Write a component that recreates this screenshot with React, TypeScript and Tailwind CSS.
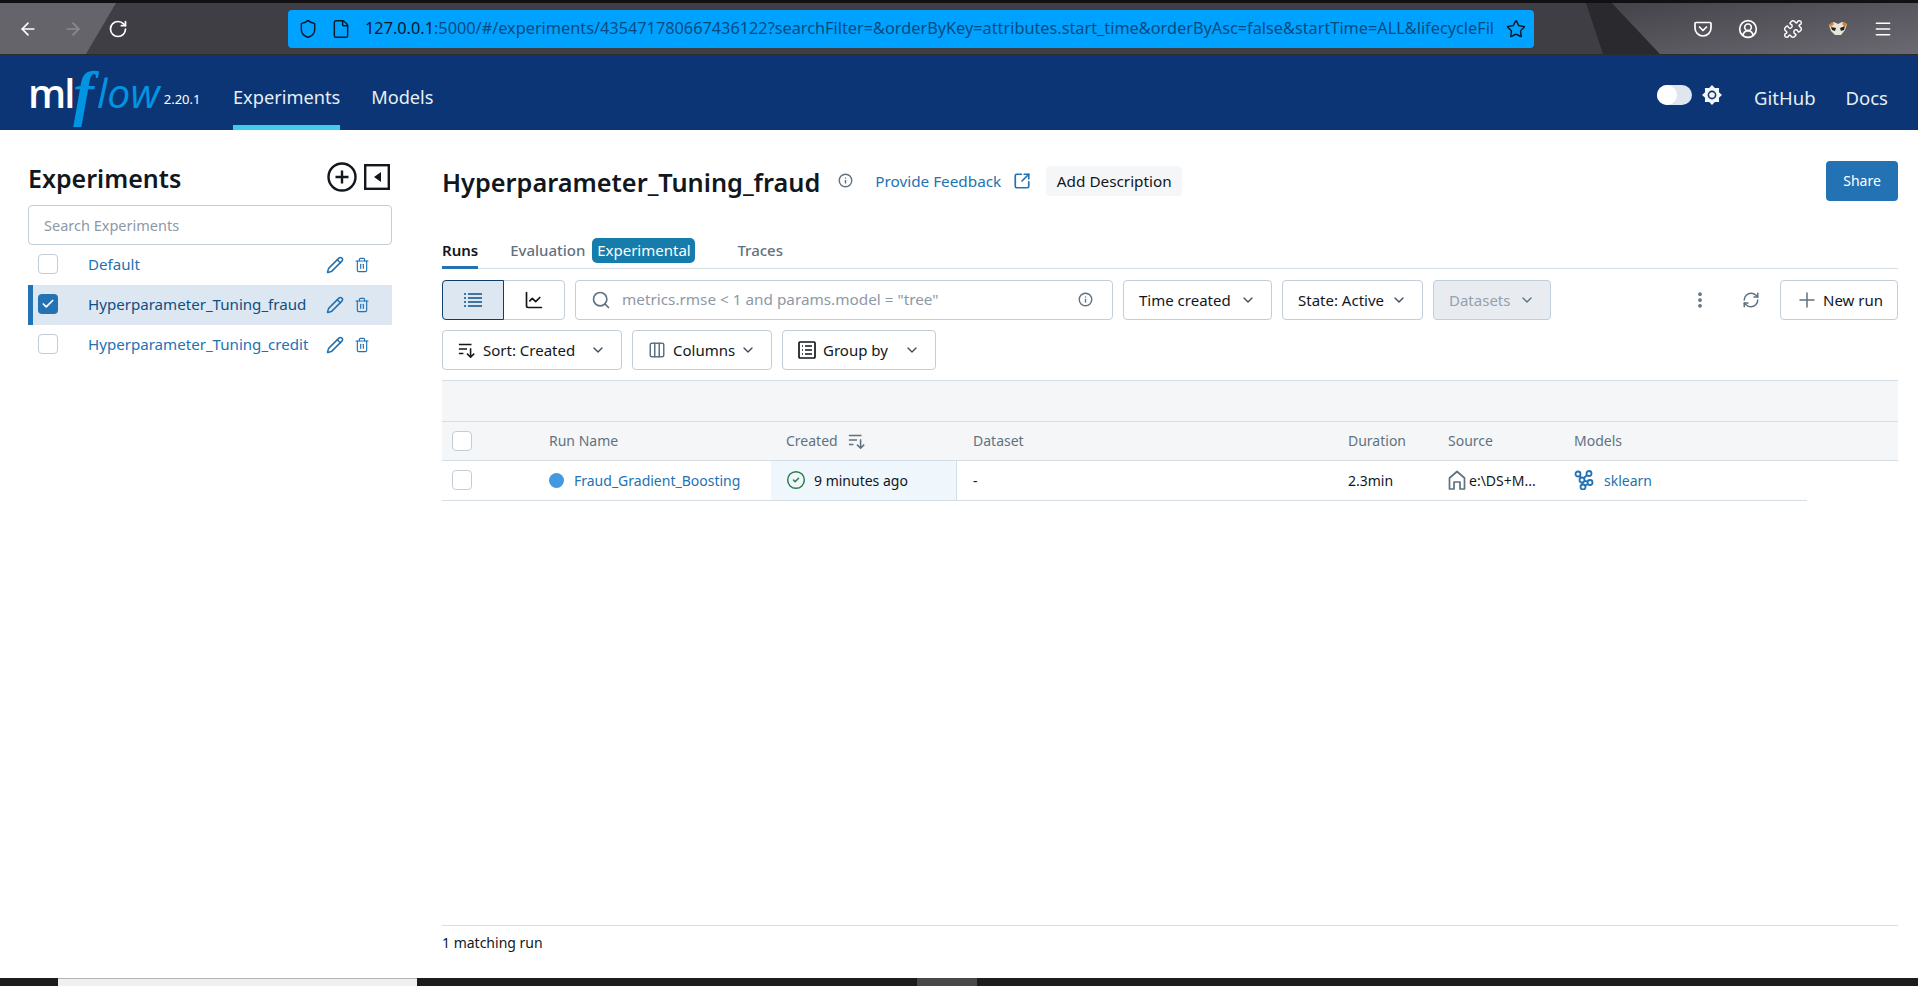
import React from 'react';
import {
  ArrowLeft,
  ArrowRight,
  RotateCw,
  Shield,
  File,
  Star,
  CircleUserRound,
  Puzzle,
  Menu,
  Pencil,
  Trash2,
  Check,
  Info,
  SquareArrowOutUpRight,
  ChartLine,
  Search,
  ChevronDown,
  EllipsisVertical,
  RefreshCw,
  Plus,
  Columns3,
  CircleCheck,
} from 'lucide-react';

const experiments = [
  { name: 'Default', selected: false },
  { name: 'Hyperparameter_Tuning_fraud', selected: true },
  { name: 'Hyperparameter_Tuning_credit', selected: false },
];

function SortIcon({ className }: { className?: string }) {
  return (
    <svg className={className} viewBox="0 0 20 20" fill="none" stroke="currentColor" strokeWidth="1.7">
      <path d="M1 4h14M1 9h9M1 14h5" />
      <path d="M14 8v10M10 14l4 4 4-4" />
    </svg>
  );
}

function ThemeBackdrop() {
  return (
    <svg className="absolute inset-0 h-full w-full" viewBox="0 0 1918 54" preserveAspectRatio="none">
      <defs>
        <linearGradient id="fade" x1="0" y1="0" x2="1" y2="1">
          <stop offset="0" stopColor="#44434a" />
          <stop offset="1" stopColor="#6b6a72" />
        </linearGradient>
      </defs>
      <rect width="1918" height="54" fill="#3f3e45" />
      <polygon points="0,3 116,3 86,54 0,54" fill="#65646b" />
      <polygon points="1586,3 1603,54 1660,54 1612,3" fill="#2a292e" />
      <polygon points="1612,3 1660,54 1918,54 1918,3" fill="url(#fade)" />
      <rect width="1918" height="3" fill="#111114" />
    </svg>
  );
}

function BrowserBar() {
  return (
    <div className="relative h-[55px] shrink-0 border-b border-[#2b2b30]">
      <ThemeBackdrop />
      <div className="relative flex h-full items-center pt-[3px]">
        <div className="flex w-[288px] items-center pl-[18px] gap-[25px]">
          <ArrowLeft className="h-5 w-5 text-white" strokeWidth={2} />
          <ArrowRight className="h-5 w-5 text-[#8c8b91]" strokeWidth={2} />
          <RotateCw className="h-5 w-5 text-white" strokeWidth={2} />
        </div>
        <div className="flex h-[38px] w-[1246px] items-center rounded-[4px] bg-[#00a2ff] pl-[10px] pr-[8px] text-[#064b80]">
          <Shield className="h-[20px] w-[20px] shrink-0 text-[#0c1a2a]" strokeWidth={1.75} />
          <File className="ml-[13px] h-[20px] w-[20px] shrink-0 text-[#0c1a2a]" strokeWidth={1.75} />
          <div className="ml-[14px] flex-1 overflow-hidden whitespace-nowrap text-[16.3px]">
            <span className="text-[#08182a]">127.0.0.1</span>
            :5000/#/experiments/435471780667436122?searchFilter=&orderByKey=attributes.start_time&orderByAsc=false&startTime=ALL&lifecycleFil
          </div>
          <Star className="ml-[10px] h-[20px] w-[20px] shrink-0 text-[#0c1a2a]" strokeWidth={1.75} />
        </div>
        <div className="ml-[159px] flex items-center gap-[25px] text-white">
          <svg className="h-5 w-5" viewBox="0 0 20 20" fill="none" stroke="currentColor" strokeWidth="1.7">
            <path d="M3 3.5h14a1 1 0 0 1 1 1V9a8 8 0 0 1-16 0V4.5a1 1 0 0 1 1-1Z" />
            <path d="M6.5 8 10 11.5 13.5 8" strokeLinecap="round" strokeLinejoin="round" />
          </svg>
          <CircleUserRound className="h-5 w-5" strokeWidth={2} />
          <Puzzle className="h-5 w-5" strokeWidth={1.75} />
          <svg className="h-5 w-5" viewBox="0 0 20 20">
            <path d="M1 6 6 3l4 2 4-2 5 2-2 6-4 5H7L3 12Z" fill="#e9e4da" />
            <path d="M3 8l5 1-1 3-3-1ZM17 7l-5 2 1 3 3-1Z" fill="#23211f" />
            <path d="M1 6 4 3l2 2-3 3ZM19 5l-3-2-2 2 3 3Z" fill="#d9822b" />
          </svg>
          <Menu className="h-5 w-5" strokeWidth={1.75} />
        </div>
      </div>
    </div>
  );
}

function Logo() {
  return (
    <div className="flex h-full w-[205px] items-center pl-[28px] text-white">
      <span className="text-[40px] leading-none font-semibold tracking-[-2px] font-['Open_Sans',sans-serif]">ml</span>
      <span className="flex items-center text-[#0194e2] text-[41px] leading-none font-medium italic font-['Open_Sans',sans-serif]">
        <span className="mr-[3px] text-[62px] leading-[40px] font-bold font-['Liberation_Serif',serif]">f</span>
        low
      </span>
      <span className="mt-[14px] ml-[4px] text-[13px]">2.20.1</span>
    </div>
  );
}

function ThemeToggle() {
  return (
    <>
      <div className="mt-[5px] flex h-[20px] w-[35px] rounded-full bg-[#dfe6ef]">
        <div className="h-[20px] w-[20px] rounded-full bg-white" />
      </div>
      <svg className="mt-[5px] ml-[10px] h-[20px] w-[20px]" viewBox="0 0 20 20">
        <path
          d="M10 0l2.87 3.07 4.2-.14-.14 4.2L20 10l-3.07 2.87.14 4.2-4.2-.14L10 20l-2.87-3.07-4.2.14.14-4.2L0 10l3.07-2.87-.14-4.2 4.2.14Z"
          fill="#f4f6fa"
        />
        <circle cx="10" cy="10" r="4.4" fill="#0b3574" />
        <circle cx="10" cy="10" r="2.8" fill="#f4f6fa" />
      </svg>
    </>
  );
}

function TopNav() {
  return (
    <header className="flex h-[75px] shrink-0 items-center bg-[#0b3574] text-[#e8eef7]">
      <Logo />
      <nav className="ml-[28px] flex h-full items-center gap-[31px] text-[18.2px]">
        <a className="flex h-full items-center border-b-[5px] border-[#43c9ed] pt-[15px]">Experiments</a>
        <a className="pt-[10px]">Models</a>
      </nav>
      <div className="ml-auto flex items-center pr-[30px] text-[18.5px]">
        <ThemeToggle />
        <a className="ml-[32px] pt-[10px]">GitHub</a>
        <a className="ml-[30px] pt-[10px]">Docs</a>
      </div>
    </header>
  );
}

function Sidebar() {
  return (
    <aside className="ml-[28px] w-[364px] shrink-0 pt-[27px]">
      <div className="flex h-[43px] items-center">
        <h2 className="text-[25px] font-semibold text-[#11171c]">Experiments</h2>
        <svg className="-mt-[3px] ml-auto h-[30px] w-[30px] text-[#11171c]" viewBox="0 0 30 30" fill="none" stroke="currentColor" strokeWidth="2.4">
          <circle cx="15" cy="15" r="13.5" />
          <path d="M15 8.5v13M8.5 15h13" />
        </svg>
        <svg className="-mt-[3px] ml-[7px] mr-[2px] h-[26px] w-[26px] text-[#11171c]" viewBox="0 0 26 26" fill="none">
          <rect x="1.2" y="1.2" width="23.6" height="23.6" stroke="currentColor" strokeWidth="2.4" />
          <path d="M17 8v10l-7-5Z" fill="currentColor" />
        </svg>
      </div>
      <input
        readOnly
        placeholder="Search Experiments"
        className="mt-[5px] h-[40px] w-full rounded-[4px] border border-[#c1cdd9] px-[15px] text-[14.5px] placeholder:text-[#8d99a6]"
      />
      {experiments.map((exp) => (
        <div
          key={exp.name}
          className={
            exp.selected
              ? 'flex h-[40px] items-center border-l-[5px] border-[#2272b4] bg-[#dde7f2] pl-[5px]'
              : 'flex h-[40px] items-center pl-[10px]'
          }
        >
          {exp.selected ? (
            <div className="-mt-[2px] flex h-[20px] w-[20px] items-center justify-center rounded-[4px] bg-[#2272b4]">
              <Check className="h-[14px] w-[14px] text-white" strokeWidth={3} />
            </div>
          ) : (
            <div className="-mt-[2px] h-[20px] w-[20px] rounded-[4px] border border-[#c1cdd9] bg-white" />
          )}
          <span className={exp.selected ? 'ml-[30px] -mt-[2px] text-[15.1px] text-[#0e4f82]' : 'ml-[30px] -mt-[2px] text-[15.1px] text-[#2272b4]'}>
            {exp.name}
          </span>
          <Pencil className="absolute left-[326px] h-[18px] w-[18px] text-[#2272b4]" strokeWidth={2} />
          <Trash2 className="absolute left-[354px] h-[16px] w-[16px] text-[#2272b4]" strokeWidth={1.75} />
        </div>
      ))}
    </aside>
  );
}

function ToolButton({ label, width, icon, muted }: { label: string; width: string; icon?: React.ReactNode; muted?: boolean }) {
  return (
    <div
      className={
        'flex h-[40px] items-center justify-between rounded-[4px] border border-[#c1cdd9] px-[15px] text-[15px] ' +
        width +
        (muted ? ' bg-[#e8ebf0] text-[#94a1ae]' : ' bg-white text-[#11171c]')
      }
    >
      <span className="flex items-center gap-[7px]">
        {icon}
        {label}
      </span>
      <ChevronDown className={muted ? 'h-4 w-4 text-[#5f7281]' : 'h-4 w-4 text-[#3c4a56]'} />
    </div>
  );
}

function Toolbar() {
  return (
    <>
      <div className="mt-[11px] flex items-center">
        <div className="flex h-[40px] w-[123px] rounded-[4px] border border-[#c1cdd9]">
          <div className="-m-px flex w-[62px] items-center justify-center rounded-l-[4px] border border-[#0e3f6b] bg-[#dde7f2]">
            <svg className="h-5 w-5 text-[#0e4f82]" viewBox="0 0 20 20" fill="none" stroke="currentColor" strokeWidth="1.7">
              <path d="M5 4h14M5 8h14M5 12h14M5 16h14" />
              <path d="M1 4h2M1 8h2M1 12h2M1 16h2" />
            </svg>
          </div>
          <div className="flex flex-1 items-center justify-center">
            <ChartLine className="h-5 w-5 text-[#11171c]" strokeWidth={2} />
          </div>
        </div>
        <div className="ml-[10px] flex h-[40px] w-[538px] items-center rounded-[4px] border border-[#c1cdd9] pl-[15px] pr-[19px] text-[15.3px] text-[#8d99a6]">
          <Search className="h-[20px] w-[20px] text-[#5f7281]" />
          <span className="ml-[11px]">metrics.rmse &lt; 1 and params.model = "tree"</span>
          <Info className="ml-auto h-[15px] w-[15px] text-[#5f7281]" strokeWidth={2.25} />
        </div>
        <div className="ml-[10px] flex gap-[10px]">
          <ToolButton label="Time created" width="w-[149px]" />
          <ToolButton label="State: Active" width="w-[141px]" />
          <ToolButton label="Datasets" width="w-[118px]" muted />
        </div>
        <EllipsisVertical className="ml-[139px] h-5 w-5 text-[#5f7281]" strokeWidth={2.5} />
        <RefreshCw className="ml-[32px] h-[18px] w-[18px] text-[#5f7281]" />
        <div className="ml-auto flex h-[40px] w-[118px] items-center justify-center gap-[4px] rounded-[4px] border border-[#c1cdd9] text-[15px] text-[#11171c]">
          <Plus className="h-6 w-6 text-[#5f7281]" strokeWidth={1.5} />
          New run
        </div>
      </div>
      <div className="mt-[10px] flex gap-[10px]">
        <ToolButton label="Sort: Created" width="w-[180px]" icon={<SortIcon className="h-[18px] w-[18px]" />} />
        <ToolButton label="Columns" width="w-[140px]" icon={<Columns3 className="h-[18px] w-[18px] text-[#5f7281]" />} />
        <ToolButton
          label="Group by"
          width="w-[154px]"
          icon={
            <svg className="h-[18px] w-[18px]" viewBox="0 0 18 18" fill="none" stroke="currentColor" strokeWidth="1.7">
              <rect x="1" y="1" width="16" height="16" rx="1" />
              <path d="M7 5h7M7 9h7M7 13h7M4 5h1M4 9h1M4 13h1" />
            </svg>
          }
        />
      </div>
    </>
  );
}

function RunsTable() {
  return (
    <div className="mt-[10px] text-[14px]">
      <div className="h-[42px] border-y border-[#d5dde5] bg-[#f5f6f8]" />
      <div className="grid h-[39px] grid-cols-[107px_222px_186px_391px_100px_126px_324px] items-center border-b border-[#d5dde5] bg-[#f5f6f8] text-[#5f7281]">
        <div className="pl-[10px]">
          <div className="h-[20px] w-[20px] rounded-[4px] border border-[#c1cdd9] bg-white" />
        </div>
        <div>Run Name</div>
        <div className="flex items-center gap-[10px] pl-[15px]">
          Created
          <SortIcon className="h-[18px] w-[18px]" />
        </div>
        <div className="pl-[16px]">Dataset</div>
        <div>Duration</div>
        <div>Source</div>
        <div>Models</div>
      </div>
      <div className="grid h-[40px] w-[1365px] grid-cols-[107px_222px_186px_391px_100px_126px_233px] items-center border-b border-[#d5dde5] text-[#11171c]">
        <div className="pl-[10px]">
          <div className="h-[20px] w-[20px] rounded-[4px] border border-[#c1cdd9] bg-white" />
        </div>
        <div className="flex items-center">
          <span className="h-[15px] w-[15px] rounded-full bg-[#4299e0]" />
          <span className="ml-[10px] text-[#2272b4]">Fraud_Gradient_Boosting</span>
        </div>
        <div className="flex h-full items-center gap-[8px] border-r border-[#d5dde5] bg-[#eff6fc] pl-[15px]">
          <CircleCheck className="h-[20px] w-[20px] text-[#277c43]" strokeWidth={1.75} />
          9 minutes ago
        </div>
        <div className="pl-[16px]">-</div>
        <div>2.3min</div>
        <div className="flex items-center gap-[3px]">
          <svg className="h-[20px] w-[18px] text-[#5f7281]" viewBox="0 0 18 20" fill="none" stroke="currentColor" strokeWidth="1.7">
            <path d="M1.5 19V8L9 1.5 16.5 8v11h-4.5v-7H6v7Z" strokeLinejoin="round" />
          </svg>
          e:\DS+M...
        </div>
        <div className="flex items-center gap-[10px] text-[#2272b4]">
          <svg className="h-[20px] w-[20px]" viewBox="0 0 20 20" fill="none" stroke="currentColor" strokeWidth="1.8">
            <circle cx="4" cy="4" r="2.5" />
            <circle cx="15" cy="3.5" r="2.5" />
            <circle cx="8" cy="10" r="2.5" />
            <circle cx="16" cy="12.5" r="2.5" />
            <circle cx="9" cy="17" r="2.5" />
            <path d="M6 5.5 7 8M13 5l-3.5 3.5M10.4 10.6l3.4 1.2M8.4 12.5l.4 2M14 14l-3 1.8" />
          </svg>
          sklearn
        </div>
      </div>
    </div>
  );
}

function MainPanel() {
  return (
    <main className="ml-[50px] flex w-[1456px] flex-col">
      <div className="flex items-center pt-[30px]">
        <h1 className="mt-[4px] text-[25.3px] font-semibold text-[#11171c]">Hyperparameter_Tuning_fraud</h1>
        <Info className="ml-[18px] h-[15px] w-[15px] text-[#5f7281]" strokeWidth={2.25} />
        <a className="ml-[22px] text-[15.3px] text-[#2272b4]">Provide Feedback</a>
        <SquareArrowOutUpRight className="ml-[12px] h-[18px] w-[18px] text-[#2272b4]" strokeWidth={2.25} />
        <div className="ml-[15px] flex h-[30px] w-[136px] items-center justify-center rounded-[4px] bg-[#f5f6f8] text-[15.3px] text-[#11171c]">
          Add Description
        </div>
        <div className="ml-auto flex h-[40px] w-[72px] items-center justify-center rounded-[4px] bg-[#2272b4] text-[14px] text-white">
          Share
        </div>
      </div>
      <div className="mt-[36px] flex h-[31px] items-start border-b border-[#d5dde5] text-[15px] font-medium text-[#5f7281]">
        <div className="flex h-[31px] items-center border-b-[3px] border-[#2272b4] pb-[3px] font-semibold text-[#11171c]">Runs</div>
        <div className="ml-[32px] flex h-[25px] items-center">Evaluation</div>
        <div className="ml-[7px] flex h-[25px] w-[103px] items-center justify-center rounded-[5px] bg-[#157cac] font-normal text-white">
          Experimental
        </div>
        <div className="ml-[42px] flex h-[25px] items-center">Traces</div>
      </div>
      <Toolbar />
      <RunsTable />
      <div className="mt-auto mb-[20px] flex h-[33px] items-center border-t border-[#d5dde5] text-[14px] text-[#11171c]">1 matching run</div>
    </main>
  );
}

export default function App(): React.ReactElement {
  return (
    <div className="flex h-[986px] w-[1918px] flex-col overflow-hidden bg-white font-['Noto_Sans',sans-serif]">
      <BrowserBar />
      <TopNav />
      <div className="relative flex flex-1">
        <Sidebar />
        <MainPanel />
      </div>
      {/* taskbar strip at the very bottom */}
      <div className="flex h-[8px] shrink-0 bg-[#1c1c1c]">
        <div className="ml-[58px] w-[359px] border-t border-[#b5b5b5] bg-[#f0f0f0]" />
        <div className="ml-[500px] w-[60px] bg-[#484848]" />
      </div>
    </div>
  );
}
